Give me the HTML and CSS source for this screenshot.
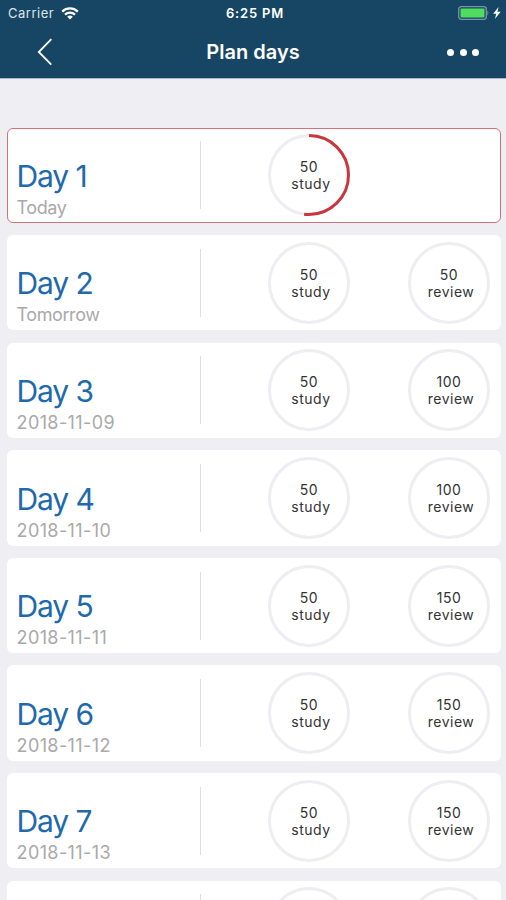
FILE: index.html
```html
<!DOCTYPE html>
<html lang="en">
<head>
  <meta charset="UTF-8" />
  <meta name="viewport" content="width=device-width, initial-scale=1.0"/>
  <title>Plan days</title>
  <link rel="stylesheet" href="styles.css">
</head>
<body>

<header class="header">
  <div class="status-bar">
    <div class="carrier">
      <span>Carrier</span>
      <svg class="wifi" viewBox="0 0 18 13" width="18" height="13">
        <path d="M1.2 4.6 A11.2 11.2 0 0 1 16.8 4.6" />
        <path d="M4 7.6 A7.2 7.2 0 0 1 14 7.6" />
        <path class="wifi-dot" d="M9 12.6 L6.2 9.8 A4 4 0 0 1 11.8 9.8 Z" />
      </svg>
    </div>
    <div class="time">6:25 PM</div>
    <div class="battery">
      <svg viewBox="0 0 44 14" width="44" height="14">
        <rect x="0.7" y="0.7" width="27.6" height="12.6" rx="2.5" fill="none" stroke="#7795a6" stroke-width="1.3" />
        <path d="M29.4 4.5 Q31.4 7 29.4 9.5 Z" fill="#7795a6" />
        <rect x="2.5" y="2.5" width="24" height="9" rx="1" fill="#4fdc5f" />
        <path d="M40.6 1 L35.2 7.8 H38.3 L36.9 13 L42.6 5.8 H39.4 Z" fill="#fff" />
      </svg>
    </div>
  </div>
  <div class="nav-bar">
    <svg class="back" viewBox="0 0 16 28" width="16" height="28">
      <path d="M14.3 1.2 L1.8 14 L14.3 26.6" />
    </svg>
    <h1>Plan days</h1>
    <div class="more">
      <span></span><span></span><span></span>
    </div>
  </div>
</header>

<main class="days">
  <div class="card active">
    <div class="day"><h2>Day 1</h2><p>Today</p></div>
    <div class="ring">
      <svg viewBox="0 0 82 82">
        <circle class="track" cx="41" cy="41" r="39.5" />
        <circle class="progress" cx="41" cy="41" r="39.5" pathLength="100" />
      </svg>
      <span>50</span><span class="label">study</span>
    </div>
  </div>

  <div class="card">
    <div class="day"><h2>Day 2</h2><p>Tomorrow</p></div>
    <div class="ring">
      <svg viewBox="0 0 82 82"><circle class="track" cx="41" cy="41" r="39.5" /></svg>
      <span>50</span><span class="label">study</span>
    </div>
    <div class="ring">
      <svg viewBox="0 0 82 82"><circle class="track" cx="41" cy="41" r="39.5" /></svg>
      <span>50</span><span class="label">review</span>
    </div>
  </div>

  <div class="card">
    <div class="day"><h2>Day 3</h2><p class="date">2018-11-09</p></div>
    <div class="ring">
      <svg viewBox="0 0 82 82"><circle class="track" cx="41" cy="41" r="39.5" /></svg>
      <span>50</span><span class="label">study</span>
    </div>
    <div class="ring">
      <svg viewBox="0 0 82 82"><circle class="track" cx="41" cy="41" r="39.5" /></svg>
      <span>100</span><span class="label">review</span>
    </div>
  </div>

  <div class="card">
    <div class="day"><h2>Day 4</h2><p class="date">2018-11-10</p></div>
    <div class="ring">
      <svg viewBox="0 0 82 82"><circle class="track" cx="41" cy="41" r="39.5" /></svg>
      <span>50</span><span class="label">study</span>
    </div>
    <div class="ring">
      <svg viewBox="0 0 82 82"><circle class="track" cx="41" cy="41" r="39.5" /></svg>
      <span>100</span><span class="label">review</span>
    </div>
  </div>

  <div class="card">
    <div class="day"><h2>Day 5</h2><p class="date">2018-11-11</p></div>
    <div class="ring">
      <svg viewBox="0 0 82 82"><circle class="track" cx="41" cy="41" r="39.5" /></svg>
      <span>50</span><span class="label">study</span>
    </div>
    <div class="ring">
      <svg viewBox="0 0 82 82"><circle class="track" cx="41" cy="41" r="39.5" /></svg>
      <span>150</span><span class="label">review</span>
    </div>
  </div>

  <div class="card">
    <div class="day"><h2>Day 6</h2><p class="date">2018-11-12</p></div>
    <div class="ring">
      <svg viewBox="0 0 82 82"><circle class="track" cx="41" cy="41" r="39.5" /></svg>
      <span>50</span><span class="label">study</span>
    </div>
    <div class="ring">
      <svg viewBox="0 0 82 82"><circle class="track" cx="41" cy="41" r="39.5" /></svg>
      <span>150</span><span class="label">review</span>
    </div>
  </div>

  <div class="card">
    <div class="day"><h2>Day 7</h2><p class="date">2018-11-13</p></div>
    <div class="ring">
      <svg viewBox="0 0 82 82"><circle class="track" cx="41" cy="41" r="39.5" /></svg>
      <span>50</span><span class="label">study</span>
    </div>
    <div class="ring">
      <svg viewBox="0 0 82 82"><circle class="track" cx="41" cy="41" r="39.5" /></svg>
      <span>150</span><span class="label">review</span>
    </div>
  </div>

  <div class="card">
    <div class="day"></div>
    <div class="ring">
      <svg viewBox="0 0 82 82"><circle class="track" cx="41" cy="41" r="39.5" /></svg>
    </div>
    <div class="ring">
      <svg viewBox="0 0 82 82"><circle class="track" cx="41" cy="41" r="39.5" /></svg>
    </div>
  </div>
</main>

</body>
</html>
```
FILE: styles.css
```css
:root {
  --header: #174664;
  --bg: #eeeef3;
  --blue: #2069ad;
  --grey: #a9a9a9;
  --red: #c8373d;
  --track: #ededf2;
}

* {
  margin: 0;
  padding: 0;
  box-sizing: border-box;
}

body {
  height: 900px;
  overflow: hidden;
  background: var(--bg);
  font-family: Inter, "Liberation Sans", sans-serif;
  color: #333;
}

.header {
  height: 79px;
  background: var(--header);
  border-bottom: 1px solid #a9b9cb;
  color: #fff;
}

.status-bar {
  display: grid;
  grid-template-columns: 1fr auto 1fr;
  align-items: center;
  height: 26px;
  padding: 0 4px 0 8px;
  font-size: 13px;
}

.carrier {
  display: flex;
  align-items: center;
  gap: 7px;
  color: #dce5ea;
  letter-spacing: 0.5px;
}

.wifi {
  fill: none;
  stroke: #fff;
  stroke-width: 2.2;
}

.wifi .wifi-dot {
  fill: #fff;
  stroke: none;
}

.time {
  font-weight: 600;
  letter-spacing: 0.8px;
}

.battery {
  display: flex;
  justify-content: flex-end;
}

.nav-bar {
  display: grid;
  grid-template-columns: 1fr auto 1fr;
  align-items: center;
  height: 52px;
  padding: 0 27px;
}

.back {
  margin-left: 10px;
  fill: none;
  stroke: #fff;
  stroke-width: 1.8;
}

.nav-bar h1 {
  font-size: 20px;
  font-weight: 600;
}

.more {
  display: flex;
  justify-content: flex-end;
  gap: 5.5px;
}

.more span {
  width: 7px;
  height: 7px;
  border-radius: 50%;
  background: #fff;
}

.days {
  display: flex;
  flex-direction: column;
  gap: 12.2px;
  padding: 48.5px 5px 0 6.5px;
}

.card {
  display: grid;
  grid-template-columns: 193px 149.5px 1fr;
  align-items: center;
  flex: none;
  height: 95.4px;
  border: 1px solid transparent;
  border-radius: 6px;
  background: #fff;
}

.card.active {
  border-color: #d2707b;
}

.day {
  height: 68px;
  padding: 14.6px 0 0 9px;
  border-right: 1px solid #dfdfe2;
}

.day h2 {
  color: var(--blue);
  font-size: 30px;
  font-weight: 400;
  line-height: 40px;
  letter-spacing: -1.1px;
}

.day p {
  color: var(--grey);
  font-size: 18px;
  line-height: 24px;
  letter-spacing: -0.4px;
}

.day .date {
  letter-spacing: 0.4px;
}

.ring {
  display: flex;
  flex-direction: column;
  align-items: center;
  justify-content: center;
  justify-self: end;
  position: relative;
  width: 82px;
  height: 82px;
  font-size: 14px;
  line-height: 17px;
  letter-spacing: 0.5px;
}

.ring:last-child:nth-child(3) {
  margin-right: 10px;
}

.ring svg {
  position: absolute;
  inset: 0;
  fill: none;
  stroke-width: 3;
}

.ring .track {
  stroke: var(--track);
}

/* starts at twelve o'clock */
.ring .progress {
  stroke: var(--red);
  stroke-dasharray: 52 48;
  transform: rotate(-90deg);
  transform-origin: center;
}

.ring .label {
  padding-left: 4px;
}
```
